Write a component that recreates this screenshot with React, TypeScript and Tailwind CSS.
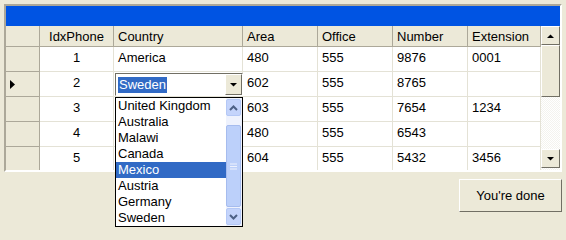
import React from "react";

const cols = [
  { name: "IdxPhone", w: 74, center: true },
  { name: "Country", w: 129 },
  { name: "Area", w: 75 },
  { name: "Office", w: 75 },
  { name: "Number", w: 75 },
  { name: "Extension", w: 73 },
];

const rows = [
  ["1", "America", "480", "555", "9876", "0001"],
  ["2", "", "602", "555", "8765", ""],
  ["3", "", "603", "555", "7654", "1234"],
  ["4", "", "480", "555", "6543", ""],
  ["5", "", "604", "555", "5432", "3456"],
];

const items = ["United Kingdom", "Australia", "Malawi", "Canada", "Mexico", "Austria", "Germany", "Sweden"];

function ClassicArrow({ up }: { up?: boolean }) {
  return (
    <svg width="7" height="4" viewBox="0 0 7 4">
      {up ? <polygon points="0,4 7,4 3.5,0.5" fill="#000" /> : <polygon points="0,0 7,0 3.5,3.5" fill="#000" />}
    </svg>
  );
}

function XpArrow({ up }: { up?: boolean }) {
  return (
    <svg width="9" height="6" viewBox="0 0 9 6">
      <polyline
        points={up ? "1,5 4.5,1.5 8,5" : "1,1 4.5,4.5 8,1"}
        fill="none"
        stroke="#4d6185"
        strokeWidth="2"
      />
    </svg>
  );
}

export default function App() {
  return (
    <div
      className="relative w-[566px] h-[240px] bg-[#ECE9D8] overflow-hidden"
      style={{ fontFamily: '"Liberation Sans", Arial, sans-serif' }}
    >
      <div className="absolute left-[4px] top-[4px] w-[558px] h-[168px] border-2 border-t-[#aca899] border-l-[#aca899] border-r-[#ffffff] border-b-[#ffffff] flex flex-col overflow-hidden">
        <div className="h-[20px] bg-[#0054E3] shrink-0" />
        <div className="flex flex-1 min-h-0">
          <div className="w-[535px] flex flex-col text-[13px] text-black">
            {/* header */}
            <div className="flex h-[21px] shrink-0">
              <div className="w-[34px] bg-[#ECE9D8] border-r border-b border-[#aca899]" />
              {cols.map((c) => (
                <div
                  key={c.name}
                  className={`bg-[#ECE9D8] border-r border-b border-[#aca899] flex items-center leading-none ${c.center ? "justify-center" : "pl-[4px]"}`}
                  style={{ width: c.w }}
                >
                  {c.name}
                </div>
              ))}
            </div>
            {rows.map((r, i) => (
              <div key={i} className="flex h-[25px] shrink-0">
                <div className="w-[34px] bg-[#ECE9D8] border-r border-b border-[#aca899] flex items-center pl-[4px]">
                  {i === 1 && (
                    <svg width="5" height="9" viewBox="0 0 5 9">
                      <polygon points="0,0 5,4.5 0,9" fill="#000" />
                    </svg>
                  )}
                </div>
                {r.map((v, j) => (
                  <div
                    key={j}
                    className={`bg-white border-r border-b border-[#e4e2d6] flex items-center leading-none pb-[3px] ${cols[j].center ? "justify-center" : "pl-[4px]"}`}
                    style={{ width: cols[j].w }}
                  >
                    {v}
                  </div>
                ))}
              </div>
            ))}
          </div>
          {/* grid vertical scrollbar */}
          <div className="w-[19px] flex flex-col bg-[repeating-conic-gradient(#f4f3ee_0%_25%,#ffffff_0%_50%)] bg-[length:2px_2px]">
            <div className="h-[19px] bg-[#ECE9D8] border border-t-white border-l-white border-r-[#716f64] border-b-[#716f64] flex items-center justify-center shrink-0">
              <ClassicArrow up />
            </div>
            <div className="h-[52px] bg-[#ECE9D8] border border-t-white border-l-white border-r-[#716f64] border-b-[#716f64] shrink-0" />
            <div className="flex-1" />
            <div className="h-[19px] bg-[#ECE9D8] border border-t-white border-l-white border-r-[#716f64] border-b-[#716f64] flex items-center justify-center shrink-0 mb-[2px]">
              <ClassicArrow />
            </div>
          </div>
        </div>
      </div>

      {/* combo editor */}
      <div className="absolute left-[115px] top-[73px] w-[128px] h-[23px] bg-white border border-t-[#716f64] border-l-[#716f64] border-r-white border-b-white flex items-center text-[13px]">
        <span className="ml-[2px] bg-[#316AC5] text-white px-[1px] leading-[16px] h-[16px]">Sweden</span>
        <div className="ml-auto w-[17px] h-[21px] bg-[#ECE9D8] border border-t-white border-l-white border-r-[#716f64] border-b-[#716f64] flex items-center justify-center">
          <ClassicArrow />
        </div>
      </div>

      {/* dropdown list */}
      <div className="absolute left-[115px] top-[97px] w-[128px] h-[130px] bg-white border border-black flex text-[13px] text-black">
        <div className="flex-1 flex flex-col">
          {items.map((it) => (
            <div
              key={it}
              className={`h-[16px] leading-[16px] pl-[2px] ${it === "Mexico" ? "bg-[#316AC5] text-white" : ""}`}
            >
              {it}
            </div>
          ))}
        </div>
        <div className="w-[16px] flex flex-col bg-[#eef2fd] py-[1px] pr-[1px]">
          <div className="h-[17px] rounded-[2px] bg-[#c4d4fb] border border-[#b4c8f6] flex items-center justify-center shrink-0">
            <XpArrow up />
          </div>
          <div className="h-[9px] shrink-0" />
          <div className="h-[82px] rounded-[2px] bg-[#bcd0fa] border border-[#a6bcee] flex items-center justify-center shrink-0">
            <svg width="7" height="7" viewBox="0 0 7 7">
              <line x1="0" y1="1" x2="7" y2="1" stroke="#eef2fd" />
              <line x1="0" y1="3.5" x2="7" y2="3.5" stroke="#eef2fd" />
              <line x1="0" y1="6" x2="7" y2="6" stroke="#eef2fd" />
            </svg>
          </div>
          <div className="flex-1" />
          <div className="h-[17px] rounded-[2px] bg-[#c4d4fb] border border-[#b4c8f6] flex items-center justify-center shrink-0">
            <XpArrow />
          </div>
        </div>
      </div>

      {/* button */}
      <div className="absolute left-[459px] top-[179px] w-[103px] h-[33px] bg-[#ECE9D8] border border-t-white border-l-white border-r-[#716f64] border-b-[#716f64] flex items-center justify-center text-[13px] text-black">
        You're done
      </div>
    </div>
  );
}
